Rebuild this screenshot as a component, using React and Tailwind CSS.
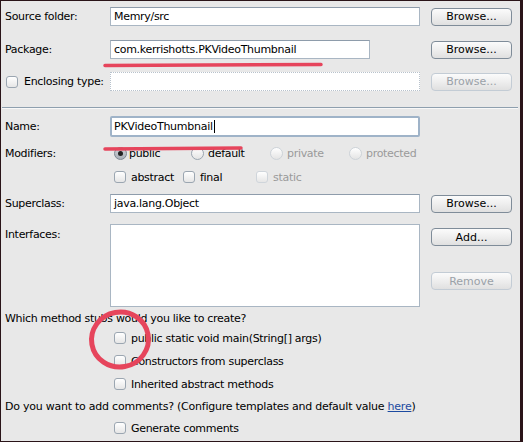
import React from "react";

const font = { fontFamily: '"DejaVu Sans", Verdana, sans-serif' };

function Field({ w = "w-[310px]", children, disabled, focus, h = "h-[19px]" }) {
  if (disabled)
    return (
      <div className={`${w} ${h} bg-white border border-dotted border-[#b8c2cc]`} />
    );
  if (focus)
    return (
      <div className={`${w} h-[21px] -my-[1px] rounded-[2px] border-2 border-[#9fb3c8] bg-white flex items-center`}>
        <div className="pl-[2px] text-[11px] tracking-[-0.25px] text-black leading-none flex items-center">
          {children}
          <span className="ml-[1px] inline-block w-[1px] h-[13px] bg-black" />
        </div>
      </div>
    );
  return (
    <div className={`${w} ${h} bg-white border border-[#a9b6c3] border-t-[#8e9cab] flex items-center pl-[3px] text-[11px] tracking-[-0.3px] text-black leading-none`}>
      {children}
    </div>
  );
}

function Button({ children, disabled }) {
  return (
    <div
      className={`w-[81px] h-[18px] rounded-[4px] border flex items-center justify-center text-[11px] leading-none bg-gradient-to-b from-[#fbfbfb] via-[#eeeeee] to-[#e0e0e0] ${
        disabled ? "border-[#c3ccd5] text-[#9aa1a8]" : "border-[#7f8c99] text-black"
      }`}
    >
      {children}
    </div>
  );
}

function Check({ disabled }) {
  return (
    <div
      className={`w-[12px] h-[12px] rounded-[3px] border bg-gradient-to-b from-white to-[#e6e6e6] shrink-0 ${
        disabled ? "border-[#cfd5db]" : "border-[#9ba6b1]"
      }`}
    />
  );
}

function Radio({ selected, disabled }) {
  if (selected)
    return (
      <div className="w-[13px] h-[13px] rounded-full border border-[#7c8792] bg-gradient-to-b from-[#cfd3d8] to-[#a9b0b8] flex items-center justify-center shrink-0">
        <div className="w-[5px] h-[5px] rounded-full bg-[#222]" />
      </div>
    );
  return (
    <div
      className={`w-[13px] h-[13px] rounded-full border bg-gradient-to-b from-white to-[#e4e4e4] shrink-0 ${
        disabled ? "border-[#cdd3d9]" : "border-[#9aa5b0]"
      }`}
    />
  );
}

function Label({ children, disabled }) {
  return (
    <div className={`w-[105px] shrink-0 text-[11px] leading-none ${disabled ? "text-[#999]" : "text-black"}`}>
      {children}
    </div>
  );
}

export default function App() {
  return (
    <div
      style={font}
      className="relative w-[523px] h-[442px] bg-[#e8e8e8] border-t border-l border-b border-r-[3px] border-[#2a1418] overflow-hidden tracking-[-0.3px]"
    >
      <div className="pl-[4px] pr-[8px] pt-[6px] flex flex-col">
        {/* Source folder */}
        <div className="flex items-center h-[19px]">
          <Label>Source folder:</Label>
          <Field>Memry/src</Field>
          <div className="ml-[11px] tracking-normal"><Button>Browse...</Button></div>
        </div>
        {/* Package */}
        <div className="flex items-center h-[19px] mt-[14px]">
          <Label>Package:</Label>
          <Field w="w-[260px]">com.kerrishotts.PKVideoThumbnail</Field>
          <div className="ml-[61px] tracking-normal"><Button>Browse...</Button></div>
        </div>
        {/* Enclosing */}
        <div className="flex items-center h-[19px] mt-[13px]">
          <div className="w-[105px] shrink-0 flex items-center">
            <div className="ml-[1px]"><Check /></div>
            <span className="ml-[6px] text-[11px] leading-none text-black">Enclosing type:</span>
          </div>
          <Field disabled />
          <div className="ml-[11px] tracking-normal"><Button disabled>Browse...</Button></div>
        </div>
        {/* Separator */}
        <div className="-ml-[3px] mt-[16px] w-[516px] h-[2px] border-t border-[#8e9fae] border-b border-b-[#f8f8f8]" />
        {/* Name */}
        <div className="flex items-center h-[19px] mt-[8px]">
          <Label>Name:</Label>
          <Field focus>PKVideoThumbnail</Field>
        </div>
        {/* Modifiers */}
        <div className="flex items-center h-[13px] mt-[11px]">
          <Label>Modifiers:</Label>
          <div className="pl-[4px] flex items-center text-[11px] leading-none">
            <div className="w-[77px] flex items-center"><Radio selected /><span className="ml-[2px] text-black">public</span></div>
            <div className="w-[79px] flex items-center"><Radio /><span className="ml-[4px] text-black">default</span></div>
            <div className="w-[79px] flex items-center"><Radio disabled /><span className="ml-[4px] text-[#9a9a9a]">private</span></div>
            <div className="flex items-center"><Radio disabled /><span className="ml-[4px] text-[#9a9a9a]">protected</span></div>
          </div>
        </div>
        {/* abstract final static */}
        <div className="flex items-center h-[12px] mt-[11px]">
          <div className="w-[105px] shrink-0" />
          <div className="pl-[4px] flex items-center text-[11px] leading-none">
            <div className="w-[69px] flex items-center"><Check /><span className="ml-[5px] text-black">abstract</span></div>
            <div className="w-[73px] flex items-center"><Check /><span className="ml-[5px] text-black">final</span></div>
            <div className="flex items-center"><Check disabled /><span className="ml-[5px] text-[#9a9a9a]">static</span></div>
          </div>
        </div>
        {/* Superclass */}
        <div className="flex items-center h-[19px] mt-[11px]">
          <Label>Superclass:</Label>
          <Field>java.lang.Object</Field>
          <div className="ml-[11px] tracking-normal"><Button>Browse...</Button></div>
        </div>
        {/* Interfaces */}
        <div className="flex mt-[11px]">
          <div className="w-[105px] shrink-0 pt-[5px] text-[11px] leading-none text-black">Interfaces:</div>
          <div className="w-[310px] h-[83px] bg-white border border-[#a9b6c3]" />
          <div className="ml-[11px] pt-[4px] flex flex-col gap-[26px] tracking-normal">
            <Button>Add...</Button>
            <Button disabled>Remove</Button>
          </div>
        </div>
        {/* Which method stubs */}
        <div className="mt-[5px] h-[12px] flex items-center text-[11px] leading-none text-black">
          Which method stubs would you like to create?
        </div>
        <div className="pl-[109px] flex flex-col gap-[11px] mt-[8px] text-[11px] leading-none text-black">
          <div className="flex items-center h-[12px]"><Check /><span className="ml-[5px]">public static void main(String[] args)</span></div>
          <div className="flex items-center h-[12px]"><Check /><span className="ml-[5px]">Constructors from superclass</span></div>
          <div className="flex items-center h-[12px]"><Check /><span className="ml-[5px]">Inherited abstract methods</span></div>
        </div>
        <div className="mt-[10px] h-[12px] flex items-center text-[11px] leading-none text-black tracking-[-0.24px] whitespace-pre">
          Do you want to add comments? (Configure templates and default value{" "}
          <span className="text-[#1c4aa0] underline">here</span>)
        </div>
        <div className="pl-[109px] mt-[10px] flex items-center h-[12px] text-[11px] leading-none text-black">
          <Check /><span className="ml-[5px]">Generate comments</span>
        </div>
      </div>

      {/* red annotations overlay */}
      <svg className="absolute left-0 top-0 pointer-events-none" width="523" height="442">
        <path d="M104 64.5 C180 64 250 64.5 320 63.5" stroke="#e6455c" strokeWidth="3.5" strokeLinecap="round" fill="none" />
        <path d="M104 148 C160 147.5 200 147 240 147" stroke="#e6455c" strokeWidth="3.5" strokeLinecap="round" fill="none" />
        <ellipse cx="119" cy="338.5" rx="28.5" ry="27.5" stroke="#e6455c" strokeWidth="5" fill="none" transform="rotate(-10 119 338.5)" />
      </svg>
    </div>
  );
}
